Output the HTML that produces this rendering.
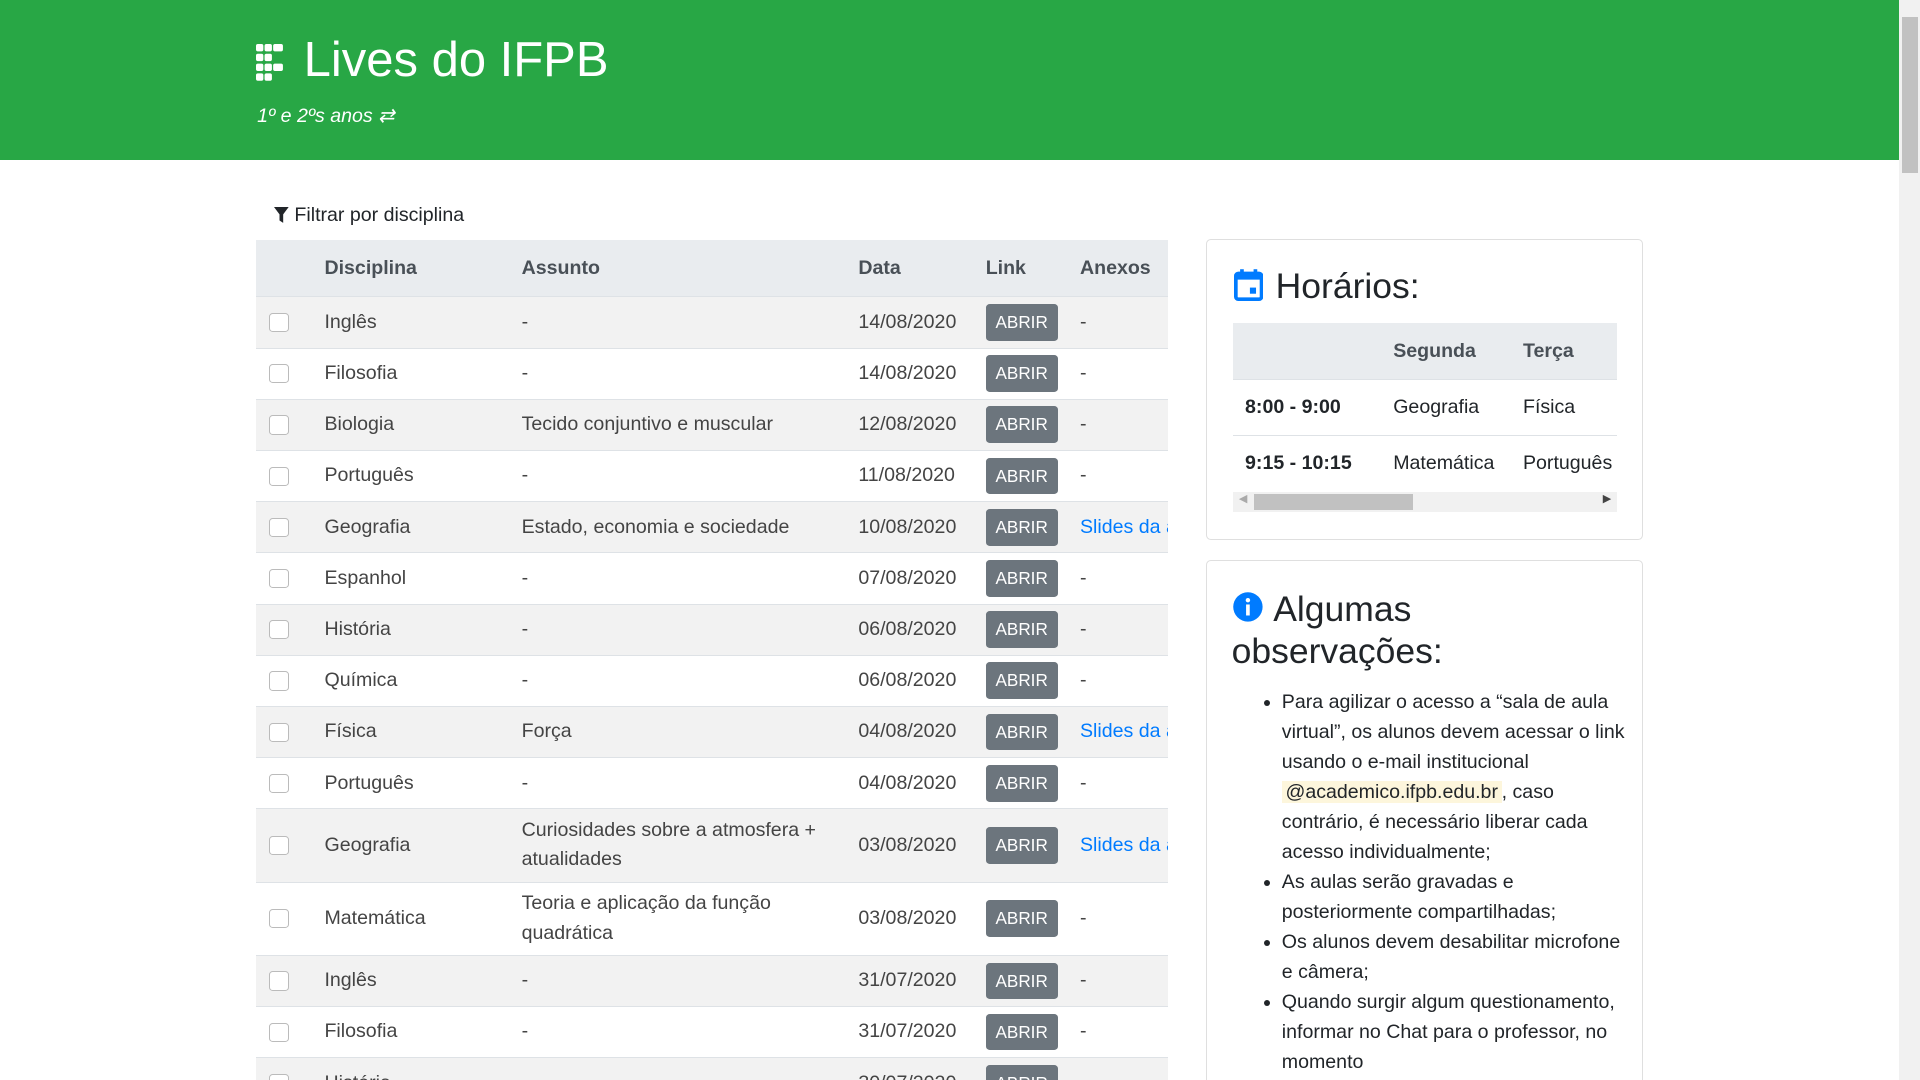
<!DOCTYPE html>
<html><head><meta charset="utf-8">
<style>
html,body{margin:0;padding:0;overflow:hidden;background:#fff}
#w{zoom:1.22449;width:1568px;height:882px;position:relative;font-family:"Liberation Sans",sans-serif;color:#212529;font-size:16px;overflow:hidden}
.hdr{position:absolute;left:0;top:0;width:1551px;height:131px;background:#28a745;color:#fff}
.hdr h1{position:absolute;left:248px;top:26px;margin:0;font-size:40px;font-weight:normal;letter-spacing:0}
.hdr .sub{position:absolute;left:210px;top:85px;font-style:italic;font-size:16px}
.logo{position:absolute;left:209px;top:36px}
.filt{position:absolute;left:224px;top:167px;font-size:16px}
table{border-collapse:collapse;table-layout:fixed}
.main{position:absolute;left:209px;top:196px;width:745px;overflow:hidden}
.main table{width:800px}
.main th{background:#e9ecef;text-align:left;height:46px;font-weight:bold;color:#495057;padding:0}
.main td{padding:0;height:41px;border-top:1px solid #dee2e6;color:#444;line-height:24px;vertical-align:middle}
.main tr.t td{height:59px}
.main tbody tr:nth-child(odd){background:#f2f2f2}
.cb{display:inline-block;width:14px;height:14px;border:1px solid #bbb;border-radius:3px;background:#fff;margin-left:11px;vertical-align:middle}
.btn{display:inline-block;background:#6c757d;color:#fff;font-size:14px;padding:0 8px;height:30px;line-height:30px;border-radius:3px}
a{color:#007bff;text-decoration:none;white-space:nowrap}
.card{position:absolute;left:985px;width:355px;border:1px solid #dfdfdf;border-radius:4px;background:#fff}
.card h2{margin:0;font-weight:normal;font-size:29px;line-height:35px}
.ht{position:absolute;left:21px;top:68px;width:314px;overflow:hidden}
.ht table{width:360px}
.ht th{background:#e9ecef;height:46px;text-align:left;padding:0 10px;color:#495057}
.ht td{height:45px;border-top:1px solid #dee2e6;padding:0 10px}
ul{margin:0;padding-left:40px;line-height:24.5px;font-size:16px}
code{background:#fdf6dc;font-family:"Liberation Sans",sans-serif;padding:0 3px;font-size:16px}
.sb{position:absolute;left:1551px;top:0;width:17px;height:882px;background:#f1f1f1}
</style></head><body><div id="w">
<div class="hdr">
<svg class="logo" width="22" height="30" viewBox="0 0 22 30"><g fill="#fff">
<rect x="0" y="0" width="6" height="6" rx="1.5"/><rect x="7" y="0" width="6" height="6" rx="1.5"/><rect x="14" y="0" width="8" height="6" rx="1.5"/>
<rect x="0" y="8" width="6" height="6" rx="1.5"/><rect x="7" y="8" width="6" height="6" rx="1.5"/>
<rect x="0" y="16" width="6" height="6" rx="1.5"/><rect x="7" y="16" width="6" height="6" rx="1.5"/><rect x="14" y="16" width="8" height="6" rx="1.5"/>
<rect x="0" y="24" width="6" height="6" rx="1.5"/><rect x="7" y="24" width="6" height="6" rx="1.5"/></g></svg>
<h1>Lives do IFPB</h1>
<div class="sub">1º e 2ºs anos ⇄</div>
</div>
<div class="filt"><svg width="12" height="13" viewBox="0 0 12 13" style="vertical-align:-1px"><path d="M0 0H12L7.5 6V13L4.5 11V6Z" fill="#212529"/></svg> Filtrar por disciplina</div>
<div class="main"><table>
<colgroup><col style="width:56px"><col style="width:161px"><col style="width:275px"><col style="width:104px"><col style="width:77px"><col style="width:127px"></colgroup>
<thead><tr><th></th><th>Disciplina</th><th>Assunto</th><th>Data</th><th>Link</th><th>Anexos</th></tr></thead>
<tbody>
<tr><td><span class="cb"></span></td><td>Inglês</td><td>-</td><td>14/08/2020</td><td><span class="btn">ABRIR</span></td><td>-</td></tr>
<tr><td><span class="cb"></span></td><td>Filosofia</td><td>-</td><td>14/08/2020</td><td><span class="btn">ABRIR</span></td><td>-</td></tr>
<tr><td><span class="cb"></span></td><td>Biologia</td><td>Tecido conjuntivo e muscular</td><td>12/08/2020</td><td><span class="btn">ABRIR</span></td><td>-</td></tr>
<tr><td><span class="cb"></span></td><td>Português</td><td>-</td><td>11/08/2020</td><td><span class="btn">ABRIR</span></td><td>-</td></tr>
<tr><td><span class="cb"></span></td><td>Geografia</td><td>Estado, economia e sociedade</td><td>10/08/2020</td><td><span class="btn">ABRIR</span></td><td><a>Slides da aula</a></td></tr>
<tr><td><span class="cb"></span></td><td>Espanhol</td><td>-</td><td>07/08/2020</td><td><span class="btn">ABRIR</span></td><td>-</td></tr>
<tr><td><span class="cb"></span></td><td>História</td><td>-</td><td>06/08/2020</td><td><span class="btn">ABRIR</span></td><td>-</td></tr>
<tr><td><span class="cb"></span></td><td>Química</td><td>-</td><td>06/08/2020</td><td><span class="btn">ABRIR</span></td><td>-</td></tr>
<tr><td><span class="cb"></span></td><td>Física</td><td>Força</td><td>04/08/2020</td><td><span class="btn">ABRIR</span></td><td><a>Slides da aula</a></td></tr>
<tr><td><span class="cb"></span></td><td>Português</td><td>-</td><td>04/08/2020</td><td><span class="btn">ABRIR</span></td><td>-</td></tr>
<tr class="t"><td><span class="cb"></span></td><td>Geografia</td><td>Curiosidades sobre a atmosfera + atualidades</td><td>03/08/2020</td><td><span class="btn">ABRIR</span></td><td><a>Slides da aula</a></td></tr>
<tr class="t"><td><span class="cb"></span></td><td>Matemática</td><td>Teoria e aplicação da função quadrática</td><td>03/08/2020</td><td><span class="btn">ABRIR</span></td><td>-</td></tr>
<tr><td><span class="cb"></span></td><td>Inglês</td><td>-</td><td>31/07/2020</td><td><span class="btn">ABRIR</span></td><td>-</td></tr>
<tr><td><span class="cb"></span></td><td>Filosofia</td><td>-</td><td>31/07/2020</td><td><span class="btn">ABRIR</span></td><td>-</td></tr>
<tr><td><span class="cb"></span></td><td>História</td><td>-</td><td>30/07/2020</td><td><span class="btn">ABRIR</span></td><td>-</td></tr>
</tbody></table></div>

<div class="card" style="top:195px;height:244px">
<h2 style="position:absolute;left:22px;top:21px"><svg width="24" height="28" viewBox="0 0 24 28" style="vertical-align:-3px;margin-right:10px"><rect x="1.5" y="4.5" width="21" height="21" rx="2" fill="none" stroke="#007bff" stroke-width="3"/><rect x="1.5" y="4.5" width="21" height="5" fill="#007bff"/><rect x="5" y="1" width="3" height="5" fill="#007bff"/><rect x="16" y="1" width="3" height="5" fill="#007bff"/><rect x="13" y="16" width="5" height="5" fill="#007bff"/></svg>Horários:</h2>
<div class="ht"><table>
<colgroup><col style="width:121px"><col style="width:106px"><col style="width:133px"></colgroup>
<tr><th></th><th>Segunda</th><th>Terça</th></tr>
<tr><td><b>8:00 - 9:00</b></td><td>Geografia</td><td>Física</td></tr>
<tr><td><b>9:15 - 10:15</b></td><td>Matemática</td><td>Português</td></tr>
</table>
<div style="height:17px;background:#f1f1f1;position:relative"><div style="position:absolute;left:17px;top:2px;width:130px;height:13px;background:#c1c1c1"></div><span style="position:absolute;left:5px;top:0;font-size:9px;color:#aaa">◀</span><span style="position:absolute;right:5px;top:0;font-size:9px;color:#444">▶</span></div>
</div></div>

<div class="card" style="top:457px;height:440px">
<h2 style="position:absolute;left:20px;top:22px"><svg width="26" height="26" viewBox="0 0 26 26" style="vertical-align:-2px;margin-right:8px"><circle cx="13" cy="13" r="12" fill="#007bff"/><rect x="11.5" y="11" width="3" height="9" fill="#fff"/><circle cx="13" cy="7.5" r="1.8" fill="#fff"/></svg>Algumas<br>observações:</h2>
<ul style="position:absolute;left:21px;top:103px;width:280px">
<li>Para agilizar o acesso a “sala de aula virtual”, os alunos devem acessar o link usando o e-mail institucional <code>@academico.ifpb.edu.br</code>, caso contrário, é necessário liberar cada acesso individualmente;</li>
<li>As aulas serão gravadas e posteriormente compartilhadas;</li>
<li>Os alunos devem desabilitar microfone e câmera;</li>
<li>Quando surgir algum questionamento, informar no Chat para o professor, no momento</li>
</ul></div>
<div class="sb"><div style="position:absolute;left:2px;top:14px;width:13px;height:127px;background:#c1c1c1"></div></div>
</div></body></html>
